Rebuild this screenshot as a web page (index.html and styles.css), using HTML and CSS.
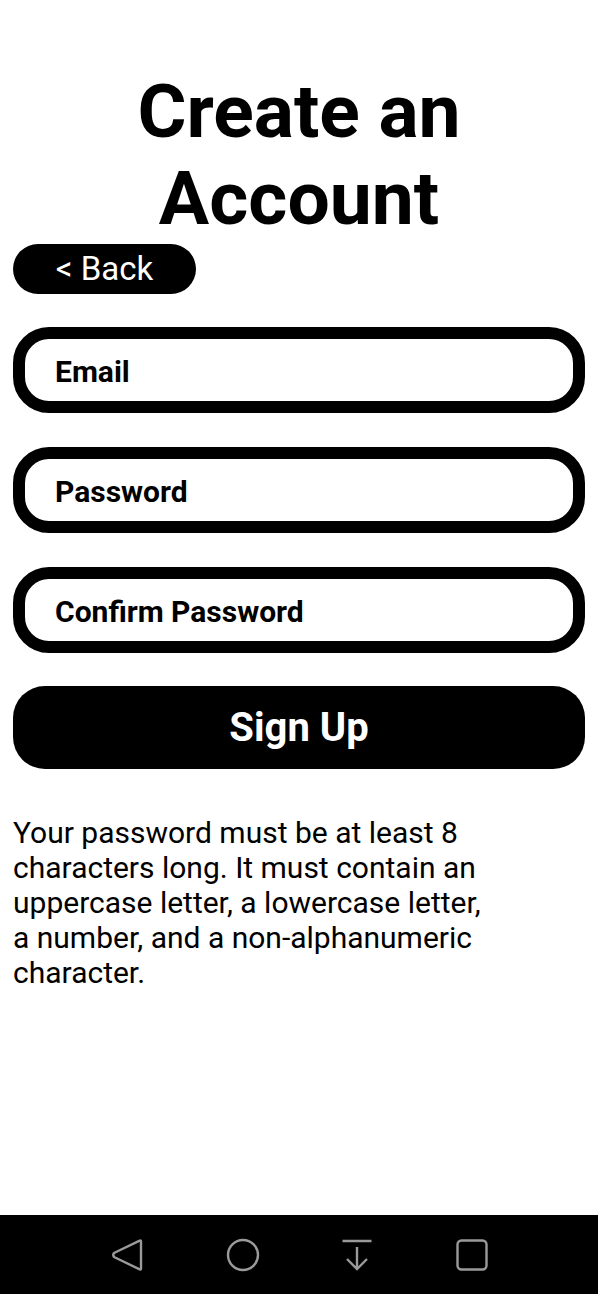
FILE: index.html
```html
<!DOCTYPE html>
<html lang="en">
<head>
<meta charset="utf-8">
<title>Create an Account</title>
<link rel="stylesheet" href="styles.css">
</head>
<body>
<div class="screen">
  <main class="content">
    <h1 class="title">Create an Account</h1>
    <button class="back-btn" type="button">&lt; Back</button>
    <form class="form">
      <input class="field" type="email" placeholder="Email">
      <input class="field" type="password" placeholder="Password">
      <input class="field" type="password" placeholder="Confirm Password">
      <button class="signup-btn" type="button">Sign Up</button>
    </form>
    <p class="hint">Your password must be at least 8 characters long. It must contain an uppercase letter, a lowercase letter, a number, and a non-alphanumeric character.</p>
  </main>
  <nav class="navbar">
    <svg class="nav-icon" viewBox="0 0 34 34" width="34" height="34"><path d="M30 3.5 L30 30.5 Q30 32 28.7 31.3 L3 19 Q1.5 17 3 15 L28.7 2.7 Q30 2 30 3.5 Z" fill="none" stroke="#9a9a9a" stroke-width="2.4" stroke-linejoin="round"/></svg>
    <svg class="nav-icon" viewBox="0 0 34 34" width="34" height="34"><circle cx="17" cy="17" r="15" fill="none" stroke="#9a9a9a" stroke-width="2.4"/></svg>
    <svg class="nav-icon" viewBox="0 0 34 34" width="34" height="34"><path d="M2.5 3 H31.5 M17 9 V31 M7 21 L17 31 L27 21" fill="none" stroke="#9a9a9a" stroke-width="2.4"/></svg>
    <svg class="nav-icon" viewBox="0 0 34 34" width="34" height="34"><rect x="2.5" y="2.5" width="29" height="29" rx="4" fill="none" stroke="#9a9a9a" stroke-width="2.4"/></svg>
  </nav>
</div>
</body>
</html>
```
FILE: styles.css
```css
* { box-sizing: border-box; }
html, body { margin: 0; padding: 0; background: #fff; }
body { font-family: Roboto, "Liberation Sans", sans-serif; color: #000; }
.screen { width: 598px; height: 1294px; display: flex; flex-direction: column; }
.content { flex: 1; padding: 68px 13px 0; display: flex; flex-direction: column; }
.title {
  margin: 0 auto;
  width: 420px;
  text-align: center;
  font-size: 75px;
  line-height: 87px;
  font-weight: 700;
}
.back-btn {
  margin-top: 2px;
  width: 183px;
  height: 50px;
  border: 0;
  border-radius: 25px;
  background: #000;
  color: #fff;
  font-family: Roboto, sans-serif;
  font-size: 33px;
  padding: 0 0 2px;
  display: flex;
  align-items: center;
  justify-content: center;
}
.form { margin-top: 33px; display: flex; flex-direction: column; gap: 34px; }
.field {
  width: 100%;
  height: 86px;
  border: 12px solid #000;
  border-radius: 36px;
  padding: 2px 0 0 30px;
  font-family: Roboto, sans-serif;
  font-size: 30px;
  font-weight: 700;
  color: #000;
  background: #fff;
  outline: none;
}
.field::placeholder { color: #000; opacity: 1; }
.signup-btn {
  height: 83px;
  margin-top: -1px;
  border: 0;
  border-radius: 32px;
  background: #000;
  color: #fff;
  font-family: Roboto, sans-serif;
  font-size: 40px;
  font-weight: 700;
  padding: 0;
}
.hint {
  margin: 46px 0 0;
  width: 480px;
  font-size: 30px;
  line-height: 35px;
}
.navbar {
  height: 79px;
  background: #000;
  display: flex;
  align-items: center;
  justify-content: space-between;
  padding: 0 109px 0 111px;
}
.nav-icon { display: block; }
```
